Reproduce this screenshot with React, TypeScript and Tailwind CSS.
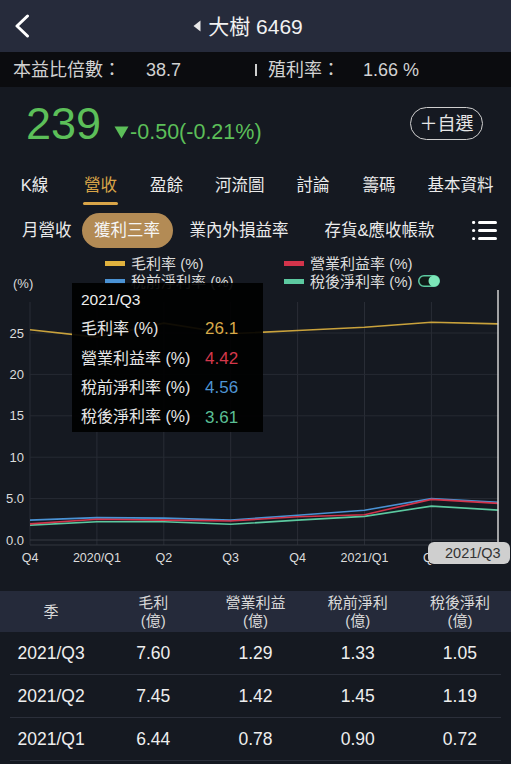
import React from "react";

const xs = Array.from({ length: 8 }, (_, i) => 30 + 66.9 * i);
const Y = (v: number) => 250 - 8.28 * v;
const pts = (arr: number[]) =>
  arr.map((v, i) => `${xs[i].toFixed(1)},${Y(v).toFixed(1)}`).join(" ");

const gm = [25.4, 24.5, 26.2, 24.9, 25.3, 25.7, 26.3, 26.1];
const op = [1.95, 2.5, 2.4, 2.3, 2.8, 3.05, 4.9, 4.42];
const pre = [2.4, 2.7, 2.65, 2.4, 3.0, 3.6, 5.0, 4.56];
const aft = [1.8, 2.2, 2.2, 1.9, 2.4, 2.85, 4.1, 3.61];

const yTicks = [
  { v: 25, l: "25" },
  { v: 20, l: "20" },
  { v: 15, l: "15" },
  { v: 10, l: "10" },
  { v: 5, l: "5.0" },
  { v: 0, l: "0.0" },
];
const xLabels = ["Q4", "2020/Q1", "Q2", "Q3", "Q4", "2021/Q1", "Q2"];

const rows = [
  ["2021/Q3", "7.60", "1.29", "1.33", "1.05"],
  ["2021/Q2", "7.45", "1.42", "1.45", "1.19"],
  ["2021/Q1", "6.44", "0.78", "0.90", "0.72"],
];

const tabs = ["K線", "營收", "盈餘", "河流圖", "討論", "籌碼", "基本資料"];

export default function App() {
  return (
    <div className="w-[511px] h-[764px] overflow-hidden bg-[#151921] font-['Liberation_Sans','Noto_Sans_CJK_TC',sans-serif] text-[#e6e6e6]">
      {/* header */}
      <div className="h-[52px] bg-[#262b3b] grid grid-cols-[1fr_auto_1fr] items-center">
        <div className="flex items-center justify-between pl-[14px] pr-[7px]">
          <svg width="16" height="24" viewBox="0 0 16 24">
            <path d="M13.5 2 L3 12 L13.5 22" stroke="#ffffff" strokeWidth="3" fill="none" strokeLinecap="round" strokeLinejoin="round" />
          </svg>
          <svg width="8" height="12" viewBox="0 0 8 12">
            <path d="M7.5 0.5 L0.5 6 L7.5 11.5 Z" fill="#e8e8e8" />
          </svg>
        </div>
        <div className="text-[21px] text-[#f2f2f2] leading-none">大樹 6469</div>
        <div />
      </div>

      {/* info bar */}
      <div className="h-[35px] bg-[#0b0c0f] flex items-center text-[18px] text-[#d2d2d2] leading-none">
        <span className="w-[146px] pl-[13px]">本益比倍數：</span>
        <span className="w-[109px]">38.7</span>
        <span className="w-[13px] flex items-center"><span className="block w-[2px] h-[12px] bg-[#cfcfcf]" /></span>
        <span className="w-[95px]">殖利率：</span>
        <span>1.66 %</span>
      </div>

      {/* price */}
      <div className="h-[73px] flex items-center pl-[26px] pr-[28px]">
        <div className="flex items-baseline text-[#5cbf59]">
          <span className="text-[45px] leading-none">239</span>
          <span className="ml-[13px] flex items-baseline text-[21.5px] leading-none">
            <svg width="15" height="13" viewBox="0 0 15 13" className="mr-[1px]">
              <path d="M0.5 0.5 L14.5 0.5 L7.5 12.5 Z" fill="#5cbf59" />
            </svg>
            -0.50(-0.21%)
          </span>
        </div>
        <div className="ml-auto w-[73px] h-[33px] rounded-full border-[1.5px] border-[#cfcfcf] flex items-center justify-center text-[18px] text-[#e6e6e6] leading-none">
          ＋自選
        </div>
      </div>

      {/* main tabs */}
      <div className="h-[47px] flex pl-[17px] gap-[31px]">
        {tabs.map((t, i) => (
          <div key={t} className="flex flex-col items-center h-full">
            <span className={`pt-[14px] text-[16.5px] leading-[22px] ${i === 1 ? "text-[#d9a548]" : "text-[#ebebeb]"}`}>{t}</span>
            <span className={`mt-[6px] h-[3px] w-[35px] rounded-full ${i === 1 ? "bg-[#d9a548]" : "bg-transparent"}`} />
          </div>
        ))}
      </div>

      {/* sub tabs */}
      <div className="h-[45px] pt-[2px] flex items-center text-[16.5px] text-[#ebebeb] leading-none">
        <span className="ml-[22px]">月營收</span>
        <span className="ml-[10px] w-[91px] h-[35px] rounded-full bg-[#b38b55] flex items-center justify-center text-[#f5f5f5]">獲利三率</span>
        <span className="ml-[17px]">業內外損益率</span>
        <span className="ml-[36px]">存貨&amp;應收帳款</span>
        <svg className="ml-auto mr-[14px]" width="25" height="19" viewBox="0 0 25 19">
          {[1.5, 9.5, 17.5].map((y) => (
            <g key={y}>
              <circle cx="1.6" cy={y} r="1.6" fill="#ffffff" />
              <rect x="6" y={y - 1.5} width="19" height="3" rx="1.5" fill="#ffffff" />
            </g>
          ))}
        </svg>
      </div>

      {/* chart */}
      <div className="relative h-[339px]">
        <div className="pt-[2px] text-[15px] text-[#dcdcdc] leading-none">
          <div className="h-[18px] flex items-center">
            <span className="w-[105px]" />
            <span className="w-[179px] flex items-center">
              <span className="w-[20px] h-[5px] bg-[#e0b23e] mr-[6px]" />
              毛利率 (%)
            </span>
            <span className="flex items-center">
              <span className="w-[20px] h-[5px] bg-[#d3344b] mr-[6px]" />
              營業利益率 (%)
            </span>
          </div>
          <div className="h-[18px] flex items-center">
            <span className="w-[105px] pl-[13px] pt-[4px] text-[13px]">(%)</span>
            <span className="w-[179px] flex items-center">
              <span className="w-[20px] h-[5px] bg-[#4a92d4] mr-[6px]" />
              稅前淨利率 (%)
            </span>
            <span className="flex items-center">
              <span className="w-[20px] h-[5px] bg-[#5cc9a0] mr-[6px]" />
              稅後淨利率 (%)
              <svg className="ml-[5px]" width="22" height="12" viewBox="0 0 22 12">
                <rect x="0.75" y="0.75" width="20.5" height="10.5" rx="5.25" fill="#0f1a17" stroke="#5cc9a0" strokeWidth="1.5" />
                <circle cx="16" cy="6" r="5.5" fill="#7de6b9" />
              </svg>
            </span>
          </div>
        </div>

        <svg className="block" width="511" height="301" viewBox="0 0 511 301">
          {xs.slice(0, 7).map((x) => (
            <line key={x} x1={x} y1="12" x2={x} y2="255" stroke="#292d36" strokeWidth="1" />
          ))}
          {yTicks.map((t) => (
            <line key={t.l} x1="30" y1={Y(t.v)} x2="499" y2={Y(t.v)} stroke={t.v === 0 ? "#363a43" : "#262a33"} strokeWidth="1" />
          ))}
          <line x1="30" y1="255" x2="499" y2="255" stroke="#33373f" strokeWidth="1" />
          {yTicks.map((t) => (
            <text key={t.l} x="24" y={Y(t.v) + 4.5} textAnchor="end" fontSize="13" fill="#dcdcdc">
              {t.l}
            </text>
          ))}
          {xLabels.map((l, i) => (
            <text key={i} x={xs[i]} y="271.5" textAnchor="middle" fontSize="12.5" fill="#dcdcdc">
              {l}
            </text>
          ))}
          <polyline points={pts(aft)} fill="none" stroke="#5cc9a0" strokeWidth="1.6" />
          <polyline points={pts(pre)} fill="none" stroke="#4a92d4" strokeWidth="1.6" />
          <polyline points={pts(op)} fill="none" stroke="#d3344b" strokeWidth="1.6" />
          <polyline points={pts(gm)} fill="none" stroke="#c9a23c" strokeWidth="1.6" />
          <line x1="498" y1="0" x2="498" y2="252" stroke="#d2d2d2" strokeWidth="1.5" />
        </svg>

        {/* tooltip */}
        <div className="absolute left-[72px] top-[31px] w-[191px] h-[149px] bg-black/[0.92] pl-[9px] pt-[2px] flex flex-col">
          <div className="h-[29.5px] flex items-center text-[15.5px] text-[#eeeeee]">2021/Q3</div>
          {[
            ["毛利率 (%)", "26.1", "text-[#d8aa4a]"],
            ["營業利益率 (%)", "4.42", "text-[#d4384b]"],
            ["稅前淨利率 (%)", "4.56", "text-[#4e94d4]"],
            ["稅後淨利率 (%)", "3.61", "text-[#5bbf95]"],
          ].map(([l, v, c]) => (
            <div key={l} className="h-[29.5px] flex items-center text-[16px]">
              <span className="w-[124px] text-[#e6e6e6]">{l}</span>
              <span className={`text-[17px] ${c}`}>{v}</span>
            </div>
          ))}
        </div>

        {/* badge */}
        <div className="absolute left-[428px] top-[290px] w-[82px] h-[22px] rounded-[6px] bg-[#cfcfcf] text-[#333333] text-[14.5px] leading-none flex items-center pl-[17px]">
          2021/Q3
        </div>
      </div>

      {/* table */}
      <div className="h-[41px] bg-[#252a3a] grid grid-cols-5 text-[15px] leading-[18px] text-[#d8d8d8]">
        <div className="flex items-center justify-center">季</div>
        {["毛利", "營業利益", "稅前淨利", "稅後淨利"].map((h) => (
          <div key={h} className="flex flex-col items-center justify-center">
            <span>{h}</span>
            <span>(億)</span>
          </div>
        ))}
      </div>
      {rows.map((r) => (
        <div key={r[0]}>
          <div className="h-[42px] grid grid-cols-5 items-center text-[17.5px] text-[#eeeeee]">
            {r.map((c, i) => (
              <div key={i} className="text-center">{c}</div>
            ))}
          </div>
          <div className="mx-[10px] h-px bg-[#2b2f3a]" />
        </div>
      ))}
    </div>
  );
}
